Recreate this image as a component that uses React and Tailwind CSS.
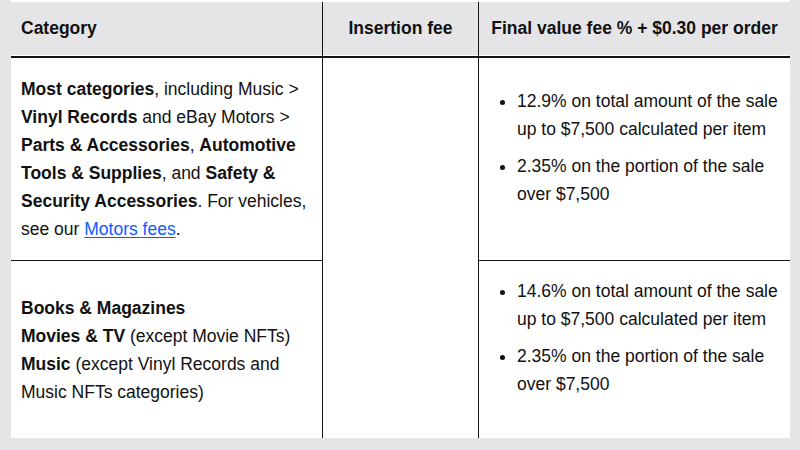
const font = { fontFamily: '"Liberation Sans", Arial, Helvetica, sans-serif' }

function HeaderCell({ children, className = '' }) {
  return (
    <div
      className={`flex h-full items-center border-b-2 border-b-[#151515] bg-[#e5e5e7] px-[10px] pb-[2px] text-[17.5px] font-bold text-[#111] shadow-[inset_0_-1px_0_#ffffff] ${className}`}
    >
      {children}
    </div>
  )
}

function FeeList({ items }) {
  return (
    <ul className="mb-[15px] list-disc pl-[28px] text-[17.5px] leading-[28px] text-[#111]">
      {items.map((lines, i) => (
        <li key={i} className="mb-[9px] whitespace-nowrap">
          {lines[0]}
          <br />
          {lines[1]}
        </li>
      ))}
    </ul>
  )
}

export default function App() {
  return (
    <div className="h-[450px] w-[800px] overflow-hidden bg-[#e5e5e7]" style={font}>
      <div className="ml-[11px] w-[779px] bg-white pt-[2px]">
        <div className="grid grid-cols-[312px_156px_311px] grid-rows-[56px_203px_177px]">
          <HeaderCell className="border-r border-r-[#151515]">Category</HeaderCell>
          <HeaderCell className="justify-center border-r border-r-[#151515]">Insertion fee</HeaderCell>
          <HeaderCell className="justify-center">Final value fee % + $0.30 per order</HeaderCell>

          <div className="flex items-center border-r border-b border-[#151515] px-[10px] text-[17.5px] leading-[28px] text-[#111]">
            <p className="whitespace-nowrap">
              <b>Most categories</b>, including Music &gt;
              <br />
              <b>Vinyl Records</b> and eBay Motors &gt;
              <br />
              <b>Parts &amp; Accessories</b>, <b>Automotive</b>
              <br />
              <b>Tools &amp; Supplies</b>, and <b>Safety &amp;</b>
              <br />
              <b>Security Accessories</b>. For vehicles,
              <br />
              see our{' '}
              <a href="#" className="text-[#0f5bff] underline underline-offset-2">
                Motors fees
              </a>
              .
            </p>
          </div>
          <div className="row-span-2 border-r border-[#151515]" />
          <div className="flex items-center border-b border-[#151515] px-[10px]">
            <FeeList
              items={[
                ['12.9% on total amount of the sale', 'up to $7,500 calculated per item'],
                ['2.35% on the portion of the sale', 'over $7,500'],
              ]}
            />
          </div>

          <div className="flex items-center border-r border-[#151515] px-[10px] text-[17.5px] leading-[28px] text-[#111]">
            <p className="whitespace-nowrap">
              <b>Books &amp; Magazines</b>
              <br />
              <b>Movies &amp; TV</b> (except Movie NFTs)
              <br />
              <b>Music</b> (except Vinyl Records and
              <br />
              Music NFTs categories)
            </p>
          </div>
          <div className="flex items-center px-[10px]">
            <FeeList
              items={[
                ['14.6% on total amount of the sale', 'up to $7,500 calculated per item'],
                ['2.35% on the portion of the sale', 'over $7,500'],
              ]}
            />
          </div>
        </div>
      </div>
    </div>
  )
}
